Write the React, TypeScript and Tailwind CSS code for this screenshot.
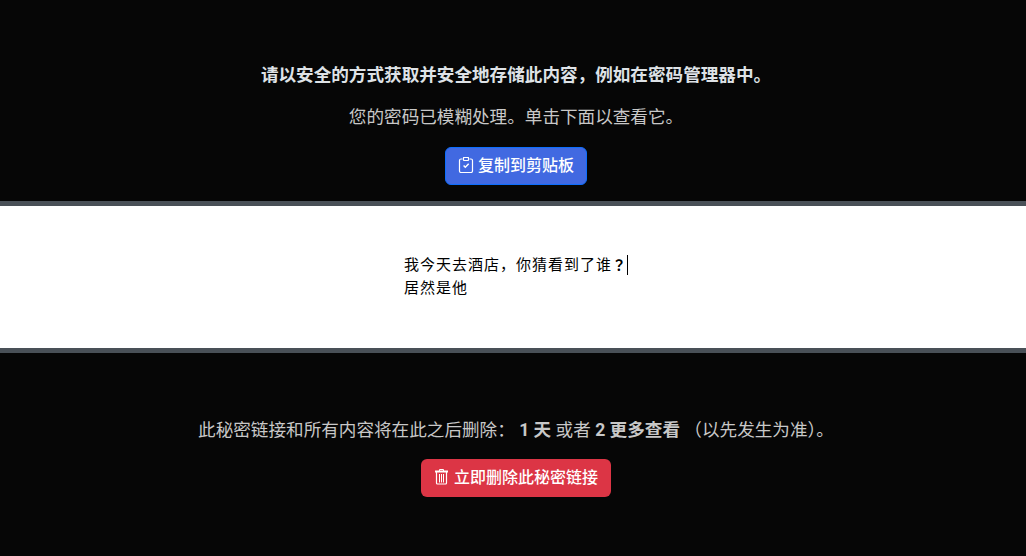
function ClipboardIcon() {
  return (
    <svg
      viewBox="0 0 16 16"
      className="-mt-0.5 size-4"
      fill="none"
      stroke="currentColor"
      strokeWidth="1.2"
    >
      <path d="M4.5 2H3Q1.5 2 1.5 3.5v10.5Q1.5 15.5 3 15.5h10q1.5 0 1.5-1.5V3.5Q14.5 2 13 2h-1.5" />
      <rect x="5.5" y="0.5" width="5" height="3" rx="0.5" />
      <path d="m5.6 8.5 1.7 1.7 3.4-3.4" strokeWidth="1.5" />
    </svg>
  );
}

function TrashIcon() {
  return (
    <svg
      viewBox="0 0 16 16"
      className="-mt-0.5 size-4"
      fill="none"
      stroke="currentColor"
    >
      <path d="M5.5 2V.5h4V2" />
      <path d="M1 2.5h13" strokeWidth="2" />
      <path d="M2.5 3v11q0 1 1 1h8q1 0 1-1V3" strokeWidth="1.2" />
      <path d="M5.5 5v8.5M7.5 5v8.5M9.5 5v8.5" />
    </svg>
  );
}

export default function App() {
  return (
    <main className="flex h-[556px] flex-col overflow-hidden bg-[#060606] text-center font-['Roboto','Noto_Sans_CJK_SC',sans-serif] text-[17.6px] leading-[26.4px] text-[#c8c8c8]">
      <section className="flex h-[201px] flex-col items-center pt-[62px] pl-1.5">
        <p className="mb-4 font-bold text-[#dee2e6]">
          请以安全的方式获取并安全地存储此内容，例如在密码管理器中。
        </p>
        <p className="mb-4">您的密码已模糊处理。单击下面以查看它。</p>
        <button className="flex h-[38px] w-[142px] items-center justify-center gap-1 rounded-md border border-[#0d6efd] bg-[#4169e1] text-base font-medium text-white">
          <ClipboardIcon />
          复制到剪贴板
        </button>
      </section>

      <section className="h-[152px] border-y-5 border-[#495057] bg-white pt-[49px] pl-[404px] text-left font-['Liberation_Mono','Noto_Sans_CJK_SC',monospace] text-[15px] leading-[23px] tracking-[1px] text-black">
        <p className="flex h-[23px] items-center">
          我今天去酒店，你猜看到了谁
          <span className="-mt-1 w-[15px] font-['Noto_Sans_CJK_JP',sans-serif] text-[14px] font-bold">
            ？
          </span>
          <span className="-mt-1 h-5 w-px bg-black" />
        </p>
        <p>居然是他</p>
      </section>

      <section className="flex flex-col items-center pt-16 pl-1.5">
        <p className="mb-4 whitespace-pre">
          此秘密链接和所有内容将在此之后删除： <strong>1 天</strong> 或者{" "}
          <strong>2 更多查看</strong> （以先发生为准）。
        </p>
        <button className="flex h-[38px] w-[190px] items-center justify-center gap-1 rounded-md bg-[#dc3545] text-base font-medium text-white">
          <TrashIcon />
          立即删除此秘密链接
        </button>
      </section>
    </main>
  );
}
